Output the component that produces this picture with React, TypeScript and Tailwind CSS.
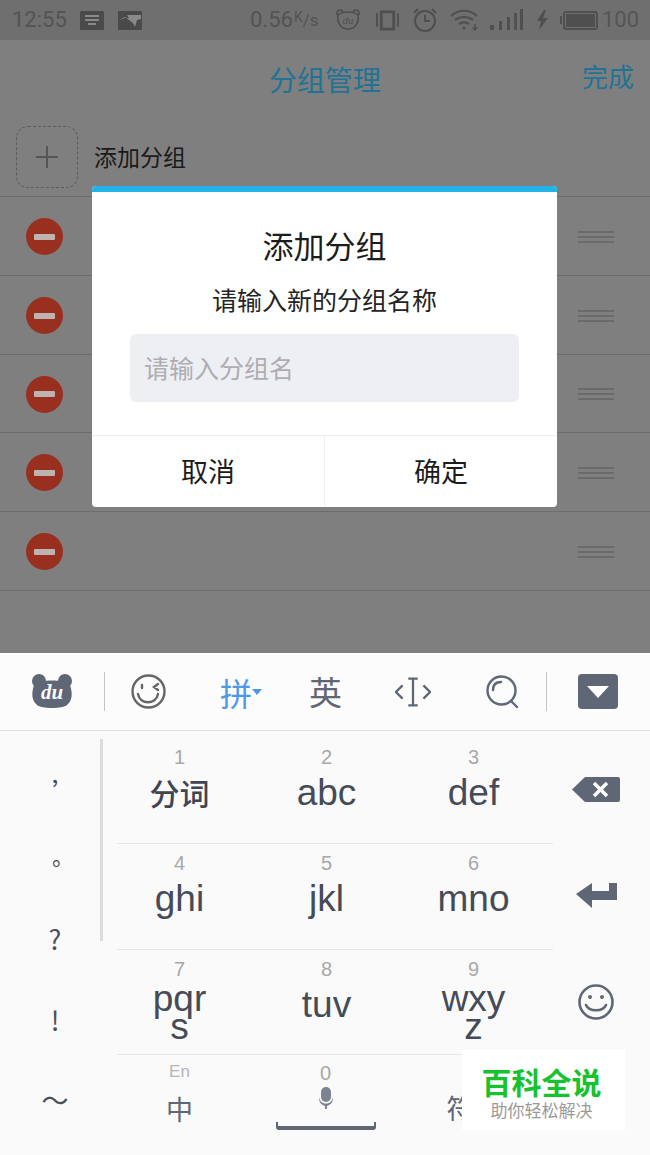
const cjk = { fontFamily: '"Noto Sans CJK SC", sans-serif' };
const sans = { fontFamily: '"Liberation Sans", sans-serif' };

const keys = [
  { num: '1', label: '分词', cjk: true },
  { num: '2', label: 'abc' },
  { num: '3', label: 'def' },
  { num: '4', label: 'ghi' },
  { num: '5', label: 'jkl' },
  { num: '6', label: 'mno' },
  { num: '7', label: 'pqr', sub: 's' },
  { num: '8', label: 'tuv' },
  { num: '9', label: 'wxy', sub: 'z' },
];

const StatusIcons = () => (
  <div className="flex items-center text-[#4f4f4f]">
    <svg width="26" height="26" viewBox="0 0 26 26" fill="none" stroke="currentColor" strokeWidth="1.6">
      <circle cx="5" cy="6" r="3" />
      <circle cx="21" cy="6" r="3" />
      <path d="M3 8c-1 7 2 14 10 14s11-7 10-14c-2-2-5-3-10-3S5 6 3 8z" fill="#6f6f6f" />
      <text x="13" y="17" textAnchor="middle" fontSize="11" fontStyle="italic" fill="currentColor" stroke="none" fontFamily="Liberation Serif, serif">du</text>
    </svg>
    <svg className="ml-[15px]" width="23" height="24" viewBox="0 0 24 24" fill="currentColor">
      <path d="M0 5h2v14H0zM22 5h2v14h-2z" />
      <path fillRule="evenodd" d="M4 2h16v21H4zM7 5v15h10V5z" />
    </svg>
    <svg className="ml-[13px]" width="26" height="26" viewBox="0 0 26 26" fill="none" stroke="currentColor" strokeWidth="2">
      <circle cx="13" cy="14" r="10" />
      <path d="M13 8v6h5M2 6l4-4M24 6l-4-4" />
    </svg>
    <svg className="ml-[12px]" width="30" height="24" viewBox="0 0 30 24" fill="none" stroke="currentColor" strokeWidth="2.2">
      <path d="M1 8c7-7 19-7 26 0M5 12c5-4 13-4 18 0M9 16c3-2 7-2 10 0" />
      <circle cx="14" cy="20" r="1.6" fill="currentColor" stroke="none" />
      <path d="M25 16v6m-2.500-2.500 2.500 2.500 2.500-2.500" strokeWidth="1.500" />
    </svg>
    <svg className="ml-[10px]" width="33" height="22" viewBox="0 0 33 22" fill="currentColor">
      <rect x="0" y="16" width="4" height="5" rx="1" />
      <rect x="9" y="12" width="3" height="9" />
      <rect x="17" y="8" width="3" height="13" />
      <rect x="24" y="4" width="3" height="17" opacity="0.9" />
      <rect x="30" y="0" width="3" height="21" />
    </svg>
    <svg className="ml-[14px]" width="11" height="20" viewBox="0 0 11 20" fill="currentColor">
      <path d="M7 0L0 11h4l-2 9 9-12H6l3-8z" />
    </svg>
    <div className="ml-[12px] flex items-center gap-[1px]">
      <div className="w-[2px] h-[8px] bg-[#4f4f4f]" />
      <div className="w-[35px] h-[19px] rounded-[3px] border-2 border-[#4f4f4f] p-[1px]">
        <div className="w-full h-full bg-[#4f4f4f]" />
      </div>
    </div>
    <span className="ml-[4px] text-[22px] leading-none text-[#555]" style={{ fontFamily: 'Roboto, sans-serif' }}>100</span>
  </div>
);

const StatusBar = () => (
  <div className="h-10 bg-[#6f6f6f] pl-[12px] flex items-center text-[#535353]" style={{ fontFamily: 'Roboto, sans-serif' }}>
    <span className="text-[22px] leading-none w-[68px]">12:55</span>
    <div className="w-[24px] h-[19px] rounded-[1px] bg-[#4a4a4a] flex flex-col items-center justify-center gap-[2px]">
      <div className="w-[14px] h-[2px] bg-[#8a8a8a]" />
      <div className="w-[14px] h-[2px] bg-[#8a8a8a]" />
      <div className="w-[8px] h-[2px] bg-[#8a8a8a]" />
    </div>
    <svg className="ml-[14px]" width="24" height="19" viewBox="0 0 24 19">
      <rect width="24" height="19" rx="1" fill="#4a4a4a" />
      <path d="M1 9l6-3 8 6 2 4 2-7 4-1V4H9l2 3-4 0z" fill="#8a8a8a" />
    </svg>
    <span className="ml-[108px] w-[44px] text-[22px] leading-none">0.56</span>
    <div className="w-[41px] h-[22px] flex text-[14px] leading-none whitespace-nowrap">
      <span className="pt-[1px]">K</span>
      <span className="text-[17px] pt-[3px]">/s</span>
    </div>
    <StatusIcons />
  </div>
);

const Minus = () => (
  <div className="w-[37px] h-[37px] rounded-full bg-[#99301f] flex items-center justify-center">
    <div className="w-[21px] h-[6px] rounded-[1px] bg-[#bdb3b1]" />
  </div>
);

const Grip = () => (
  <div className="w-[36px] flex flex-col gap-[3px]">
    <div className="h-[2px] bg-[#6a6a6a]" />
    <div className="h-[2px] bg-[#6a6a6a]" />
    <div className="h-[2px] bg-[#6a6a6a]" />
  </div>
);

const GroupRow = ({ short }: { short?: boolean }) => (
  <div className={`${short ? 'h-[78px]' : 'h-[79px]'} border-b border-[#6c6c6c] pl-[26px] pr-[36px] pt-[1px] flex items-center justify-between`}>
    <Minus />
    <Grip />
  </div>
);

const Dialog = () => (
  <div className="absolute left-[92px] top-[186px] w-[465px] h-[321px] rounded-[4px] overflow-hidden bg-white flex flex-col" style={cjk}>
    <div className="h-[6px] bg-[#22b4e9]" />
    <div className="mt-[31px] text-center text-[31px] leading-[44px] text-[#1c1c1c]">添加分组</div>
    <div className="mt-[14px] text-center text-[25px] leading-[36px] text-[#242424]">请输入新的分组名称</div>
    <div className="mx-[38px] mt-[17px] h-[68px] rounded-[6px] bg-[#eeeff3] pl-[14px] flex items-center text-[25px] text-[#adadb2]">
      请输入分组名
    </div>
    <div className="mt-[33px] flex-1 border-t border-[#eeeeee] flex">
      <div className="flex-1 flex items-center justify-center text-[27px] text-[#1c1c1c] border-r border-[#eeeeee]">取消</div>
      <div className="flex-1 flex items-center justify-center text-[27px] text-[#1c1c1c]">确定</div>
    </div>
  </div>
);

const Toolbar = () => (
  <div className="h-[78px] bg-[#fcfcfc] border-b border-[#dedede] flex items-center relative text-[#5f6675]">
    <div className="w-[104px] flex justify-center">
      <svg width="42" height="38" viewBox="0 0 42 38" fill="#5f6675">
        <circle cx="8" cy="8" r="7" />
        <circle cx="34" cy="8" r="7" />
        <path d="M3 12c5-6 31-6 36 0 3 9 2 16-3 20-4 4-26 4-30 0-5-4-6-11-3-20z" />
        <text x="21" y="26" textAnchor="middle" fontSize="21" fontStyle="italic" fontWeight="700" fill="#fcfcfc" fontFamily="Liberation Serif, serif">du</text>
      </svg>
    </div>
    <div className="w-[1px] h-[39px] bg-[#c4c4c4]" />
    <div className="ml-[26px]">
      <svg width="35" height="35" viewBox="0 0 35 35" fill="none" stroke="#666666" strokeWidth="2.400">
        <circle cx="17.500" cy="17.500" r="16" />
        <path d="M7 20c2 11 18 11 20 0M11 11v3M27 10l-4 3 4 3" strokeLinecap="round" />
      </svg>
    </div>
    <div className="ml-[54px] flex items-center w-[49px] text-[#4f97e8]">
      <span className="text-[32px] leading-none" style={cjk}>拼</span>
      <div className="w-0 h-0 border-x-[5px] border-x-transparent border-t-[6px] border-t-[#4f97e8] mt-[1px]" />
    </div>
    <span className="ml-[40px] text-[33px] leading-none text-[#5f6675]" style={cjk}>英</span>
    <div className="ml-[53px]">
      <svg width="36" height="32" viewBox="0 0 38 32" fill="none" stroke="#5f6675" strokeWidth="2.400">
        <path d="M8 9l-7 7 7 7M30 9l7 7-7 7M14 2h10M14 30h10M19 2v28" />
      </svg>
    </div>
    <div className="ml-[55px]">
      <svg width="33" height="34" viewBox="0 0 33 34" fill="none" stroke="#5f6675" strokeWidth="2.400">
        <circle cx="15.500" cy="15.500" r="14" />
        <path d="M25 26l6 6M7 15c0-5 3-8 8-8" strokeLinecap="round" />
      </svg>
    </div>
    <div className="ml-[27px] w-[1px] h-[39px] bg-[#c4c4c4]" />
    <div className="ml-[31px] w-[40px] h-[35px] rounded-[4px] bg-[#5f6675] flex items-center justify-center">
      <div className="w-0 h-0 border-x-[11px] border-x-transparent border-t-[12px] border-t-white" />
    </div>
  </div>
);

const Key = ({ num, label, sub, isCjk }: { num: string; label: string; sub?: string; isCjk?: boolean }) => (
  <div className="h-[106px] flex flex-col items-center pt-[7px] relative">
    <span className="text-[20px] leading-[24px] text-[#a8a8a8]" style={sans}>{num}</span>
    {isCjk ? (
      <span className="mt-[2px] text-[30px] leading-[42px] font-medium text-[#3f4552]" style={cjk}>{label}</span>
    ) : sub ? (
      <>
        <span className="mt-[1px] text-[37px] leading-[34px] text-[#454b57]" style={sans}>{label}</span>
        <span className="text-[37px] leading-[22px] text-[#454b57]" style={sans}>{sub}</span>
      </>
    ) : (
      <span className="mt-[4px] text-[37px] leading-[40px] text-[#454b57]" style={sans}>{label}</span>
    )}
  </div>
);

const Keypad = () => (
  <div className="flex-1 bg-[#fafafa] flex relative">
    {/* scroll indicator */}
    <div className="absolute left-[100px] top-[8px] w-[3px] h-[202px] bg-[#dcdcdc]" />
    <div className="w-[106px] pl-[4px] pt-[14px] flex flex-col items-center text-[#4a4f5a]" style={cjk}>
      <div className="h-[80px] pt-[10px] pl-[20px] flex items-center text-[26px]">’</div>
      <div className="h-[80px] pl-[16px] pb-[20px] flex items-center text-[22px]">。</div>
      <div className="h-[74px] pb-[6px] flex items-center text-[27px]">?</div>
      <div className="h-[84px] pb-[2px] flex items-center text-[27px]">!</div>
      <div className="h-[80px] pb-[5px] flex items-center text-[27px]">～</div>
    </div>
    <div className="w-[441px] pt-[7px]">
      <div className="grid grid-cols-3">
        {keys.map((k) => (
          <Key key={k.num} num={k.num} label={k.label} sub={k.sub} isCjk={k.cjk} />
        ))}
      </div>
      <div className="grid grid-cols-3">
        <div className="flex flex-col items-center pt-[6px]">
          <span className="text-[17px] leading-[20px] text-[#b5b5b5]" style={sans}>En</span>
          <span className="mt-[7px] text-[27px] leading-[40px] text-[#5f6675]" style={cjk}>中</span>
        </div>
        <div className="flex flex-col items-center pt-[6px] pr-[2px]">
          <span className="text-[20px] leading-[22px] text-[#a8a8a8]" style={sans}>0</span>
          <svg className="mt-[3px]" width="16" height="22" viewBox="0 0 16 22" fill="#7d8390">
            <rect x="3" y="0" width="10" height="15" rx="5" />
            <path d="M1 9c0 10 14 10 14 0v2c0 5-3 7-6 8v3H7v-3c-3-1-6-3-6-8z" />
          </svg>
          <div className="mt-[13px] w-[100px] h-[8px] border-2 border-t-0 border-b-4 border-[#5f6675] rounded-b-[3px]" />
        </div>
        <div className="flex flex-col items-center pt-[32px] pr-[27px]">
          <span className="text-[27px] leading-[40px] text-[#5f6675]" style={cjk}>符</span>
        </div>
      </div>
    </div>
    <div className="flex-1 pr-[5px] flex flex-col items-center text-[#5f6675]">
      <div className="h-[106px] pt-[46px]">
        <svg width="48" height="25" viewBox="0 0 48 25">
          <path d="M13 0h33a2 2 0 0 1 2 2v21a2 2 0 0 1-2 2H13L0 12.500z" fill="#5f6675" />
          <path d="M22 6l13 13M35 6L22 19" stroke="#fff" strokeWidth="3.500" />
        </svg>
      </div>
      <div className="h-[106px] pt-[46px]">
        <svg width="41" height="25" viewBox="0 0 41 25" fill="#5f6675">
          <path d="M33 0h8v17H16v8L0 11 16 0v8h17z" />
        </svg>
      </div>
      <div className="pt-[41px]">
        <svg width="36" height="36" viewBox="0 0 36 36" fill="none" stroke="#5f6675" strokeWidth="2.600">
          <circle cx="18" cy="18" r="16.500" />
          <circle cx="12" cy="13" r="2" fill="#5f6675" stroke="none" />
          <circle cx="24" cy="13" r="2" fill="#5f6675" stroke="none" />
          <path d="M8 21c3 7 17 7 20 0" strokeLinecap="round" />
        </svg>
      </div>
    </div>
    {/* row dividers */}
    <div className="absolute left-[117px] top-[112px] w-[436px] h-[1px] bg-[#e6e6e6]" />
    <div className="absolute left-[117px] top-[218px] w-[436px] h-[1px] bg-[#e6e6e6]" />
    <div className="absolute left-[117px] top-[323px] w-[436px] h-[1px] bg-[#e6e6e6]" />
    {/* watermark */}
    <div className="absolute left-[462px] top-[319px] w-[163px] h-[80px] bg-white flex flex-col items-center pt-[12px] pr-[4px]" style={cjk}>
      <span className="text-[30px] leading-[38px] font-bold text-[#17c22f]">百科全说</span>
      <span className="text-[17px] leading-[20px] text-[#9a9a9a]">助你轻松解决</span>
    </div>
  </div>
);

export default function App() {
  return (
    <div className="w-[650px] h-[1155px] relative flex flex-col overflow-hidden bg-[#7f7f7f]">
      <StatusBar />
      <div className="relative h-[78px] flex items-center justify-center" style={cjk}>
        <span className="text-[28px] text-[#1f7394]">分组管理</span>
        <span className="absolute right-[16px] top-[18px] text-[26px] leading-[36px] text-[#1f7394]">完成</span>
      </div>
      <div className="h-[79px] border-b border-[#6c6c6c] pl-[16px] flex items-center">
        <div className="w-[62px] h-[62px] rounded-[12px] border border-dashed border-[#5c5c5c] flex items-center justify-center">
          <svg width="22" height="22" viewBox="0 0 22 22" stroke="#555" strokeWidth="2">
            <path d="M11 0v22M0 11h22" />
          </svg>
        </div>
        <span className="ml-[16px] pb-[2px] text-[23px] text-[#1a1a1a]" style={cjk}>添加分组</span>
      </div>
      <GroupRow />
      <GroupRow />
      <GroupRow short />
      <GroupRow />
      <GroupRow />
      <div className="h-[62px]" />
      <Toolbar />
      <Keypad />
      <Dialog />
    </div>
  );
}
